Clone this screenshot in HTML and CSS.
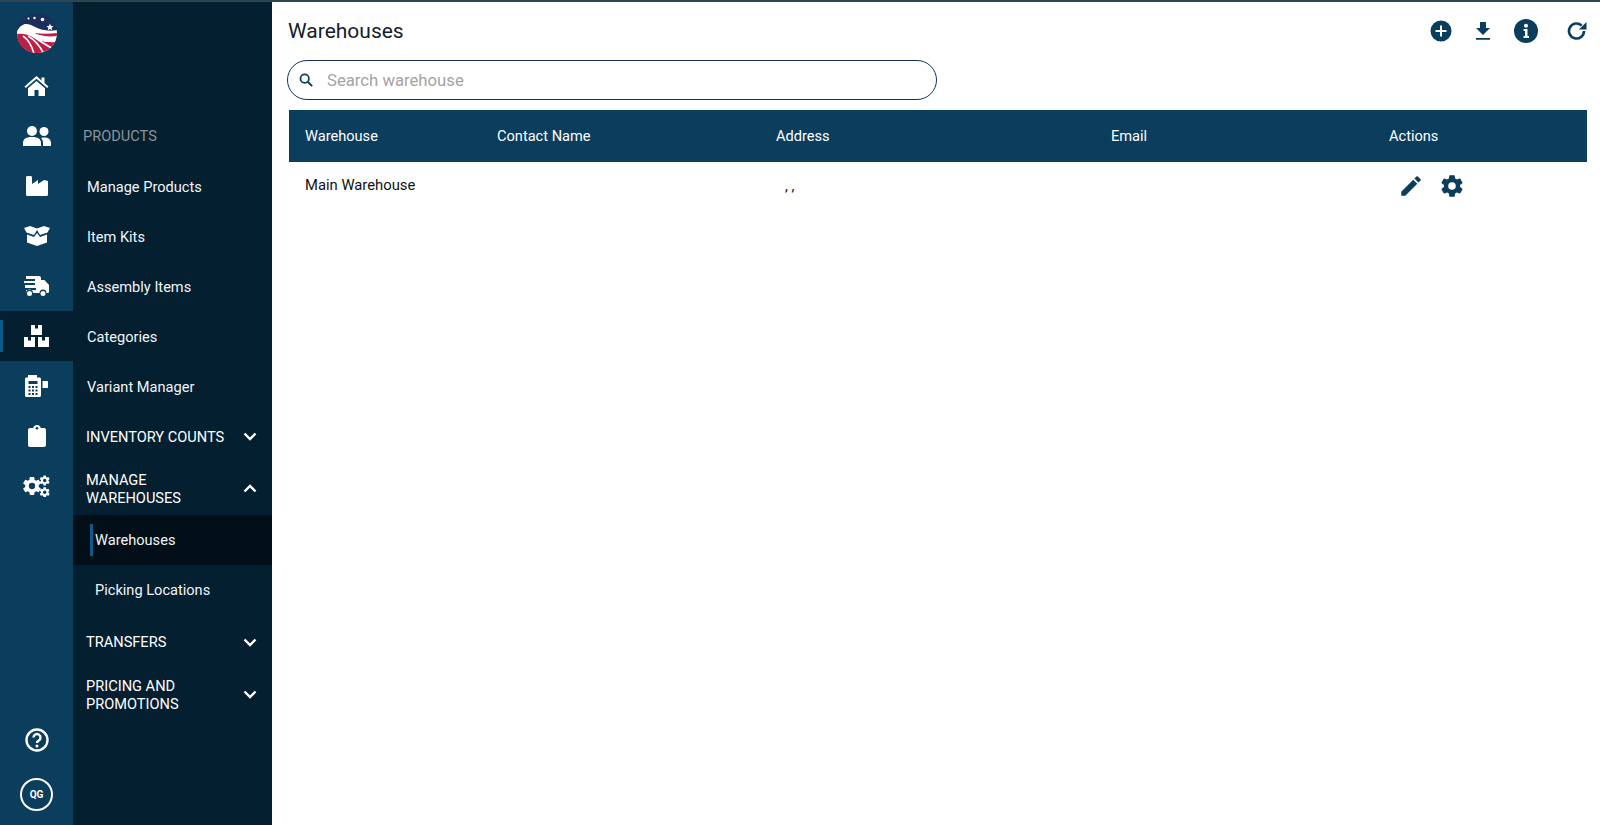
FILE: index.html
```html
<!DOCTYPE html>
<html lang="en">
<head>
    <meta charset="UTF-8">
    <title>Warehouses</title>
    <link rel="stylesheet" href="styles.css">
</head>
<body>
<div class="app">

    <!-- icon rail -->
    <nav class="rail">
        <div class="logo">
            <svg viewBox="0 0 40 40" width="40" height="40">
                <defs><clipPath id="logoClip"><circle cx="20" cy="20" r="20"/></clipPath></defs>
                <g clip-path="url(#logoClip)">
                    <rect width="40" height="40" fill="#1b2f5f"/>
                    <path d="M0 18 C3 13 6 11 9 11 C15 11 20 16 27 17 C32 18 36 18 40 17 V40 H0Z" fill="#fff"/>
                    <path d="M0 21 C7 20 12 22 17 25 C24 29 32 30 40 28 V40 H0Z" fill="#bf1e44"/>
                    <path d="M0 23 C5 22 9 24 13 30 C15 33 16 37 17 41 L0 41Z" fill="#bf1e44"/>
                    <path d="M6 23 C12 27 15 33 17 41 M11 23 C18 27 23 33 27 41 M17 24 C24 29 31 33 38 37 M22 26 C28 28 34 29 40 28" fill="none" stroke="#fff" stroke-width="1.600"/>
                    <path d="M17 20 C24 23 32 24 40 23 V20 C32 21 25 21 17 20Z" fill="#bf1e44"/>
                </g>
                <path d="M33 10.500l1 2.400 2.600.2-2 1.700.6 2.500-2.200-1.400-2.200 1.400.6-2.500-2-1.700 2.600-.2z" fill="#fff"/>
                <circle cx="11.500" cy="5.500" r="1.100" fill="#fff"/>
                <circle cx="17.500" cy="5" r="1.200" fill="#fff"/>
                <circle cx="25.500" cy="6.500" r="1.800" fill="#fff"/>
            </svg>
        </div>
        <a class="rail-item">
            <svg viewBox="0 0 24 20" width="25" height="20"><path d="M12 0L0 10.500l1.300 1.500L12 2.800 22.700 12 24 10.500 20 7V1.500h-3v3zM3.500 12.300V20H10v-6h4v6h6.500v-7.700L12 5z" fill="#fff"/></svg>
        </a>
        <a class="rail-item">
            <svg viewBox="0 0 28 20" width="28" height="20"><circle cx="9" cy="5" r="5" fill="#fff"/><circle cx="21" cy="5.500" r="4.500" fill="#fff"/><path d="M0 20v-3c0-4 3-6 9-6s9 2 9 6v3zM20 20v-3c0-2-.6-3.600-2-5 1-.4 2-.5 3-.5 4.500 0 7 2 7 5.500v3z" fill="#fff"/></svg>
        </a>
        <a class="rail-item">
            <svg viewBox="0 0 22 20" width="22" height="20"><path d="M0 1.500C0 .600 .600 0 1.500 0h3C5.400 0 6 .600 6 1.500V8l6-4v4l6-4 4 1v13.500c0 .9-.6 1.500-1.500 1.500h-19C.6 20 0 19.400 0 18.500z" fill="#fff"/></svg>
        </a>
        <a class="rail-item">
            <svg viewBox="0 0 26 20" width="26" height="20"><path d="M0 2l6-2 7 2.500L20 0l6 2-2.500 4.500L16 9l-3-5-3 5-7.500-2.500zM3 8.500l7 2.500 3-4 3 4 7-2.500v8L13 20 3 16.500z" fill="#fff"/></svg>
        </a>
        <a class="rail-item">
            <svg viewBox="0 0 27 21" width="27" height="21"><path d="M3 0h13c1 0 2 .8 2 2v2h3.500L26 9v6.500c0 .8-.5 1.500-1.500 1.500h-1a3.500 3.500 0 0 0-7 0H10a3.500 3.500 0 0 0-7 0v-3h10v-2H2V9h10V7H1V5h11V3H3z" fill="#fff"/><circle cx="6.500" cy="17.500" r="2.500" fill="#fff"/><circle cx="20" cy="17.500" r="2.500" fill="#fff"/></svg>
        </a>
        <a class="rail-item active">
            <svg viewBox="0 0 25 22" width="25" height="22"><path d="M7 0h4v3.500h3V0h4v10H7zM0 12h4v3.500h3V12h4v10H0zM14 12h4v3.500h3V12h4v10H14z" fill="#fff"/></svg>
        </a>
        <a class="rail-item">
            <svg viewBox="0 0 23 22" width="23" height="22"><path d="M3 0h9v2.500h2.500c.8 0 1.500.7 1.500 1.500v16.500c0 .8-.7 1.500-1.500 1.500h-13C.7 22 0 21.300 0 20.500V4c0-.8.7-1.500 1.500-1.500H3z" fill="#fff"/><path d="M3.500 6h9v3h-9z" fill="#0b3d5d"/><path d="M3.500 11h2v2h-2zM7 11h2v2H7zM10.500 11h2v2h-2zM3.500 14.500h2v2h-2zM7 14.500h2v2H7zM10.500 14.500h2v2h-2zM3.500 18h2v2h-2zM7 18h2v2H7zM10.500 18h2v2h-2z" fill="#0b3d5d"/><path d="M17.500 6H22c.6 0 1 .4 1 1v5c0 .6-.4 1-1 1h-4.500z" fill="#fff"/></svg>
        </a>
        <a class="rail-item">
            <svg viewBox="0 0 18 22" width="18" height="22"><path d="M2 3h3.200C5.600 1.300 7.100 0 9 0s3.400 1.300 3.800 3H16c1.100 0 2 .9 2 2v15c0 1.100-.9 2-2 2H2c-1.100 0-2-.9-2-2V5c0-1.100.9-2 2-2z" fill="#fff"/><circle cx="9" cy="3.200" r="1.300" fill="#0b3d5d"/></svg>
        </a>
        <a class="rail-item">
            <svg viewBox="0 0 28 22" width="28" height="22">
                <defs><path id="railGear" d="M19.430 12.980c.04-.32.070-.64.070-.98s-.03-.66-.07-.98l2.110-1.650c.19-.15.24-.42.120-.64l-2-3.460c-.12-.22-.39-.3-.61-.22l-2.490 1c-.52-.4-1.080-.73-1.690-.98l-.38-2.650A.488.488 0 0 0 14 2h-4c-.25 0-.46.18-.49.42l-.38 2.650c-.61.25-1.170.59-1.690.98l-2.490-1c-.23-.09-.49 0-.61.22l-2 3.460c-.13.220-.07.490.12.640l2.110 1.650c-.04.320-.07.650-.07.980s.03.660.07.980l-2.110 1.650c-.19.150-.24.420-.12.640l2 3.460c.12.220.39.300.61.220l2.490-1c.52.400 1.080.730 1.690.980l.38 2.650c.03.240.24.420.49.420h4c.25 0 .46-.18.49-.42l.38-2.650c.61-.25 1.170-.59 1.690-.98l2.490 1c.23.090.49 0 .61-.22l2-3.460c.12-.22.070-.49-.12-.64l-2.110-1.650zM12 15.500a3.500 3.500 0 1 1 0-7 3.500 3.500 0 0 1 0 7z" fill="#fff"/></defs>
                <use href="#railGear" transform="translate(-1.800 .2) scale(.9)"/>
                <use href="#railGear" transform="translate(15.700 -.5) scale(.5)"/>
                <use href="#railGear" transform="translate(15.700 11.300) scale(.5)"/>
            </svg>
        </a>
        <div class="rail-bottom">
            <a class="help">
                <svg viewBox="0 0 24 24" width="24" height="24"><circle cx="12" cy="12" r="10.500" fill="none" stroke="#fff" stroke-width="2.400"/><path d="M8.500 9.500a3.500 3.500 0 1 1 5.300 3c-1.200.7-1.800 1.300-1.800 2.500" fill="none" stroke="#fff" stroke-width="2.400"/><circle cx="12" cy="18" r="1.500" fill="#fff"/></svg>
            </a>
            <div class="avatar">QG</div>
        </div>
    </nav>

    <!-- sub menu -->
    <aside class="panel">
        <div class="panel-title">PRODUCTS</div>
        <a class="menu-link">Manage Products</a>
        <a class="menu-link">Item Kits</a>
        <a class="menu-link">Assembly Items</a>
        <a class="menu-link">Categories</a>
        <a class="menu-link">Variant Manager</a>
        <div class="menu-group one-line">
            <span>INVENTORY COUNTS</span>
            <svg class="chev" viewBox="0 0 14 9" width="14" height="9"><path d="M1.500 1.500L7 7l5.500-5.500" fill="none" stroke="#fff" stroke-width="2.400"/></svg>
        </div>
        <div class="menu-group two-line">
            <span>MANAGE WAREHOUSES</span>
            <svg class="chev" viewBox="0 0 14 9" width="14" height="9"><path d="M1.500 7.500L7 2l5.500 5.500" fill="none" stroke="#fff" stroke-width="2.400"/></svg>
        </div>
        <a class="sub-link current"><span>Warehouses</span></a>
        <a class="sub-link"><span>Picking Locations</span></a>
        <div class="menu-group one-line transfers">
            <span>TRANSFERS</span>
            <svg class="chev" viewBox="0 0 14 9" width="14" height="9"><path d="M1.500 1.500L7 7l5.500-5.500" fill="none" stroke="#fff" stroke-width="2.400"/></svg>
        </div>
        <div class="menu-group two-line">
            <span>PRICING AND PROMOTIONS</span>
            <svg class="chev" viewBox="0 0 14 9" width="14" height="9"><path d="M1.500 1.500L7 7l5.500-5.500" fill="none" stroke="#fff" stroke-width="2.400"/></svg>
        </div>
    </aside>

    <main class="content">
        <div class="topbar">
            <h1>Warehouses</h1>
            <div class="tools">
                <svg class="tool-add" viewBox="0 0 22 22" width="22" height="22"><circle cx="11" cy="11" r="10.500" fill="#0b3d5d"/><path d="M11 5.500v11M5.500 11h11" stroke="#fff" stroke-width="2"/></svg>
                <svg class="tool-down" viewBox="0 0 16 20" width="16" height="20"><path d="M5 1h6v6h4l-7 7-7-7h4zM1 17h14v1.800H1z" fill="#0b3d5d"/></svg>
                <svg class="tool-info" viewBox="0 0 24 24" width="24" height="24"><circle cx="12" cy="12" r="12" fill="#0b3d5d"/><path d="M9.500 10h4v7h1.500v2H9.500v-2H11v-5H9.500z" fill="#fff"/><circle cx="12" cy="6.800" r="2" fill="#fff"/></svg>
                <svg class="tool-refresh" viewBox="0 0 20 20" width="20" height="20"><path d="M17 10a7.500 7.500 0 1 1-2.300-5.400" fill="none" stroke="#0b3d5d" stroke-width="2.600"/><path d="M19.500 1v7.500H12z" fill="#0b3d5d"/></svg>
            </div>
        </div>
        <div class="search">
            <svg viewBox="0 0 16 16" width="14" height="14"><circle cx="6.500" cy="6.500" r="4.800" fill="none" stroke="#0b3d5d" stroke-width="2"/><path d="M10 10l5 5" stroke="#0b3d5d" stroke-width="2.200"/></svg>
            <span>Search warehouse</span>
        </div>
        <div class="grid-row grid-head">
            <div>Warehouse</div>
            <div>Contact Name</div>
            <div>Address</div>
            <div>Email</div>
            <div>Actions</div>
        </div>
        <div class="grid-row grid-body">
            <div class="name">Main Warehouse</div>
            <div></div>
            <div class="addr">, ,</div>
            <div></div>
            <div class="actions">
                <svg viewBox="0 0 24 24" width="26" height="26"><path d="M3 17.250V21h3.750L17.810 9.940l-3.750-3.750L3 17.250zM20.710 7.040a1 1 0 0 0 0-1.410l-2.340-2.340a1 1 0 0 0-1.410 0l-1.830 1.830 3.750 3.750 1.830-1.830z" fill="#0b3d5d"/></svg>
                <svg viewBox="0 0 24 24" width="26" height="26"><path d="M19.430 12.980c.04-.32.070-.64.070-.98s-.03-.66-.07-.98l2.110-1.650c.19-.15.24-.42.120-.64l-2-3.460c-.12-.22-.39-.3-.61-.22l-2.490 1c-.52-.4-1.080-.73-1.690-.98l-.38-2.650A.488.488 0 0 0 14 2h-4c-.25 0-.46.18-.49.42l-.38 2.650c-.61.25-1.170.59-1.690.98l-2.490-1c-.23-.09-.49 0-.61.22l-2 3.460c-.13.220-.07.490.12.640l2.110 1.650c-.04.320-.07.650-.07.980s.03.660.07.980l-2.110 1.650c-.19.150-.24.420-.12.640l2 3.460c.12.220.39.300.61.220l2.490-1c.52.400 1.080.730 1.690.980l.38 2.650c.03.240.24.420.49.420h4c.25 0 .46-.18.49-.42l.38-2.650c.61-.25 1.170-.59 1.690-.98l2.490 1c.23.090.49 0 .61-.22l2-3.460c.12-.22.070-.49-.12-.64l-2.110-1.650zM12 15.500a3.500 3.500 0 1 1 0-7 3.500 3.500 0 0 1 0 7z" fill="#0b3d5d"/></svg>
            </div>
        </div>
    </main>
</div>
</body>
</html>
```

FILE: styles.css
```css
html, body {
    margin: 0;
    padding: 0;
    height: 100%;
    background: #fff;
    font-family: Roboto, "Liberation Sans", sans-serif;
    overflow: hidden;
}

.app {
    display: flex;
    height: 825px;
    border-top: 2px solid #2f4650;
    box-sizing: border-box;
}

/* icon rail */
.rail {
    width: 73px;
    flex-shrink: 0;
    background: #0b3d5d;
    display: flex;
    flex-direction: column;
}

.logo {
    height: 59px;
    display: flex;
    align-items: center;
    justify-content: center;
    padding-top: 2px;
    box-sizing: border-box;
}

.rail-item {
    height: 50px;
    display: flex;
    align-items: center;
    justify-content: center;
    position: relative;
}

.rail-item.active {
    background: #041f30;
}

.rail-item.active::before {
    content: "";
    position: absolute;
    left: 0;
    top: 9px;
    width: 3px;
    height: 32px;
    background: #0e5a8a;
}

.rail-bottom {
    margin-top: auto;
    display: flex;
    flex-direction: column;
    align-items: center;
    gap: 26px;
    padding-bottom: 14px;
}

.help {
    display: flex;
}

.avatar {
    width: 29px;
    height: 29px;
    border: 2px solid #fff;
    border-radius: 50%;
    color: #fff;
    font-size: 10px;
    font-weight: 700;
    display: flex;
    align-items: center;
    justify-content: center;
}

/* sub menu */
.panel {
    width: 199px;
    flex-shrink: 0;
    background: #041f30;
    color: #fff;
    padding-top: 109px;
    font-size: 14.600px;
    box-sizing: border-box;
}

.panel-title {
    height: 50px;
    line-height: 50px;
    padding-left: 10px;
    color: #8a949b;
}

.menu-link {
    display: block;
    height: 50px;
    line-height: 52px;
    padding-left: 14px;
    color: #f2f5f7;
}

.menu-group {
    display: flex;
    align-items: center;
    justify-content: space-between;
    padding: 0 15px 0 13px;
    line-height: 18px;
}

.menu-group span {
    max-width: 150px;
    margin-top: 2px;
}

.one-line {
    height: 50px;
}

.two-line {
    height: 54px;
}

.transfers {
    margin-top: 2px;
}

.transfers span {
    margin-top: 0;
}

.sub-link {
    display: flex;
    align-items: center;
    height: 50px;
    padding-left: 17px;
    color: #f2f5f7;
}

.sub-link span {
    padding-left: 2px;
    height: 32px;
    line-height: 32px;
    border-left: 3px solid transparent;
}

.sub-link.current {
    background: #020f18;
}

.sub-link.current span {
    border-left-color: #0e5a8a;
}

/* main area */
.content {
    flex: 1;
    min-width: 0;
    padding: 0 13px 0 16px;
    margin-left: 1px;
    box-sizing: border-box;
}

.topbar {
    height: 58px;
    display: flex;
    align-items: center;
    justify-content: space-between;
}

.topbar h1 {
    margin: 0 0 0 -1px;
    font-size: 21px;
    font-weight: 400;
    color: #14202a;
}

.tools {
    display: flex;
    align-items: center;
}

.tool-down {
    margin-left: 23px;
}

.tool-info {
    margin-left: 23px;
}

.tool-refresh {
    margin-left: 29px;
}

.search {
    width: 650px;
    height: 40px;
    margin-left: -2px;
    border: 1.500px solid #12325a;
    border-radius: 20px;
    display: flex;
    align-items: center;
    gap: 14px;
    padding-left: 11px;
    box-sizing: border-box;
    font-size: 16.700px;
    color: #a3a3a3;
}

.grid-row {
    display: grid;
    grid-template-columns: 192px 279px 335px 278px 1fr;
    padding-left: 16px;
    font-size: 14.600px;
}

.grid-head {
    margin-top: 10px;
    height: 52px;
    align-items: center;
    background: #0b3d5d;
    color: #fff;
}

.grid-body {
    height: 48px;
    align-items: center;
    color: #111;
}

.name {
    padding-bottom: 2px;
    font-size: 14.800px;
}

.addr {
    padding-left: 9px;
}

.actions {
    display: flex;
    gap: 15px;
    padding-left: 9px;
}
```
